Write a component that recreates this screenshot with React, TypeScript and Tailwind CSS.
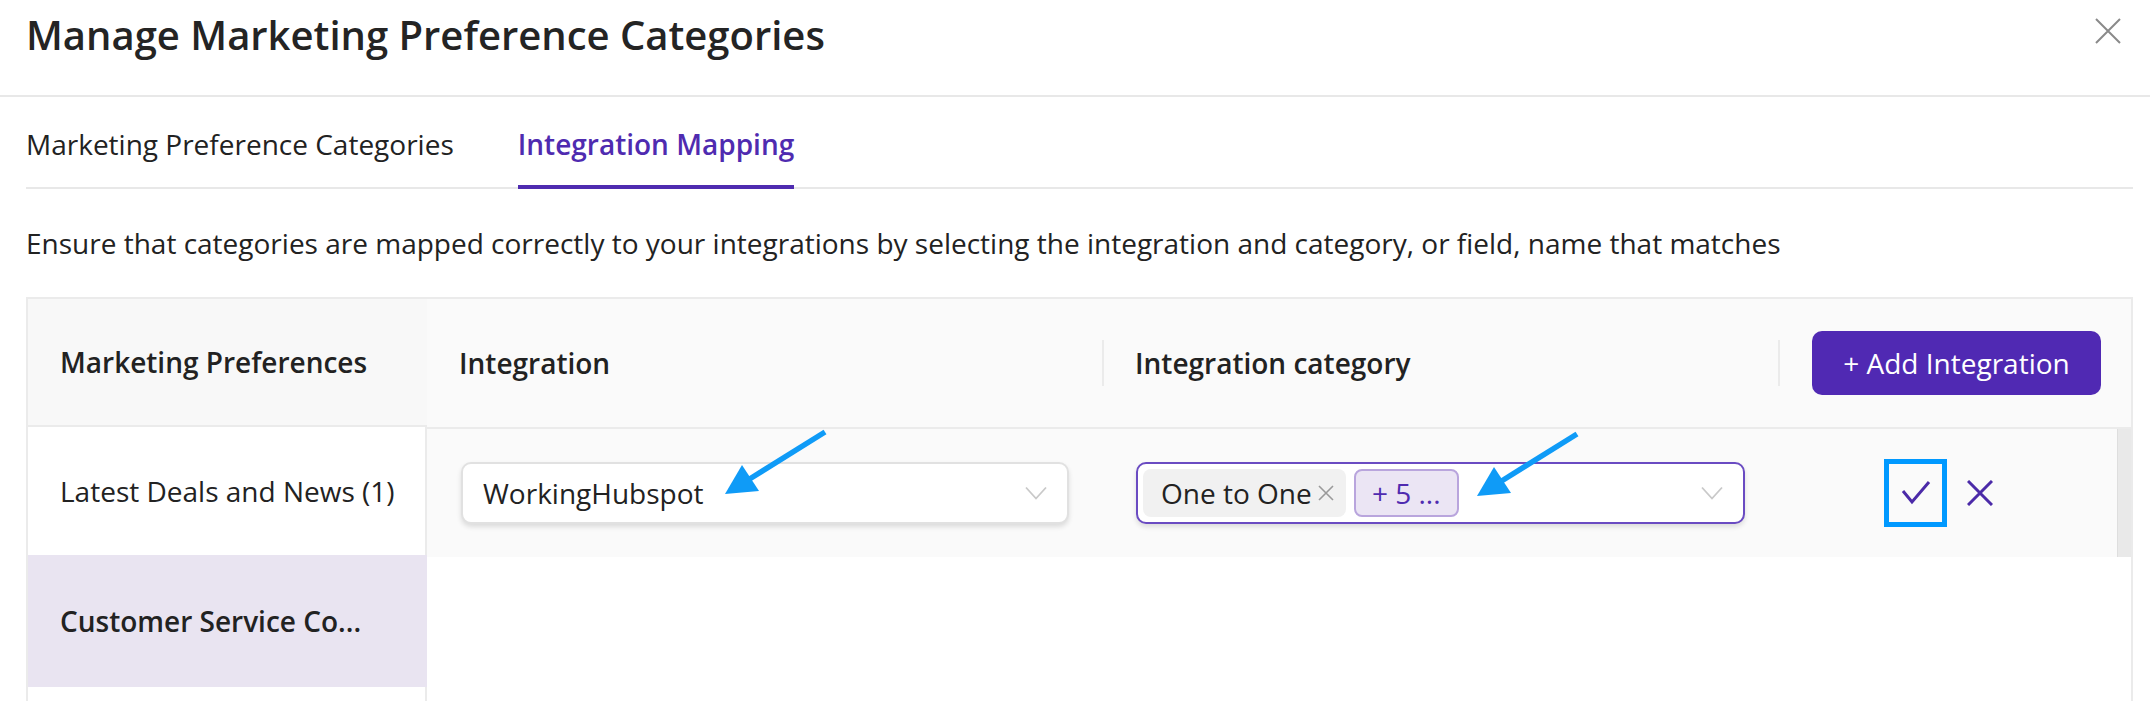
import React from "react";

function Chevron() {
  return (
    <svg width="22" height="14" viewBox="0 0 22 14" fill="none">
      <path d="M1 1.5L11 12.5L21 1.5" stroke="#c9c9c9" strokeWidth="1.8" />
    </svg>
  );
}

function Arrow({ dx, dy }: { dx: number; dy: number }) {
  return (
    <g transform={`translate(${dx} ${dy})`}>
      <line x1="825" y1="432" x2="748" y2="480" stroke="#0f9bf7" strokeWidth="5.5" strokeLinecap="butt" />
      <polygon points="725,494 742,465 759,491" fill="#0f9bf7" />
    </g>
  );
}

export default function App() {
  return (
    <div className="relative w-[2150px] h-[701px] overflow-hidden bg-white font-['Open_Sans',sans-serif] text-[#222222]">
      {/* Header */}
      <div className="h-[97px] flex items-center justify-between pl-[26px] pr-[29px] border-b-2 border-[#e8e8e8]">
        <h1 className="text-[40px] font-semibold leading-none -mt-[26px] text-[#242424]">
          Manage Marketing Preference Categories
        </h1>
        <svg width="26" height="26" viewBox="0 0 26 26" className="-mt-[34px]">
          <path d="M1 1L25 25M25 1L1 25" stroke="#8a8a8a" strokeWidth="2" />
        </svg>
      </div>

      <div className="pl-[26px] pr-[17px]">
        {/* Tabs */}
        <div className="flex gap-[64px] h-[92px] border-b-2 border-[#e8e8e8]">
          <div className="flex items-center text-[28px] text-[#222222] pt-[4px]">
            Marketing Preference Categories
          </div>
          <div className="relative flex items-center text-[28px] font-semibold text-[#4f2bb0] pt-[4px]">
            Integration Mapping
            <span className="absolute left-0 right-0 -bottom-[2px] h-[4px] bg-[#4f2bb0]" />
          </div>
        </div>

        {/* Description */}
        <div className="h-[108px] flex items-center text-[28px] text-[#222222]">
          Ensure that categories are mapped correctly to your integrations by selecting the integration and category, or field, name that matches
        </div>

        {/* Table */}
        <div className="flex h-[460px] border-2 border-[#ebebeb]">
          {/* Left column */}
          <div className="w-[399px] flex flex-col">
            <div className="h-[128px] bg-[#f8f8f8] border-b-2 border-[#ebebeb] flex items-center pl-[32px] text-[28px] font-semibold">
              Marketing Preferences
            </div>
            <div className="h-[128px] bg-white border-r-2 border-[#ebebeb] flex items-center pl-[32px] text-[28px]">
              Latest Deals and News (1)
            </div>
            <div className="h-[132px] bg-[#e9e4f1] flex items-center pl-[32px] text-[28px] font-semibold">
              Customer Service Co...
            </div>
            <div className="flex-1 bg-white border-r-2 border-[#ebebeb]" />
          </div>

          {/* Right area */}
          <div className="flex-1 flex flex-col">
            <div className="h-[130px] bg-[#fafafa] border-b-2 border-[#ebebeb] flex items-center">
              <div className="w-[675px] pl-[32px] text-[28px] font-semibold">Integration</div>
              <div className="w-[2px] h-[46px] bg-[#ebebeb]" />
              <div className="w-[674px] pl-[31px] text-[28px] font-semibold">Integration category</div>
              <div className="w-[2px] h-[46px] bg-[#ebebeb]" />
              <div className="flex-1 pl-[32px]">
                <button className="w-[289px] h-[64px] rounded-[10px] bg-[#5029b3] text-white text-[28px] flex items-center justify-center">
                  + Add Integration
                </button>
              </div>
            </div>

            <div className="h-[128px] bg-[#fafafa] flex items-stretch">
              <div className="w-[675px] pl-[34px] flex items-center">
                <div className="w-[608px] h-[62px] bg-white border-2 border-[#e1e1e1] rounded-[10px] shadow-[0_3px_5px_rgba(0,0,0,0.12)] flex items-center justify-between pl-[20px] pr-[20px]">
                  <span className="text-[28px]">WorkingHubspot</span>
                  <Chevron />
                </div>
              </div>
              <div className="w-[676px] pl-[34px] flex items-center">
                <div className="w-[609px] h-[62px] bg-white border-2 border-[#6a4bc2] rounded-[10px] shadow-[0_3px_5px_rgba(0,0,0,0.12)] flex items-center justify-between pl-[5px] pr-[20px]">
                  <div className="flex items-center gap-[8px]">
                    <div className="h-[48px] rounded-[8px] bg-[#f1f1f1] flex items-center pl-[18px] pr-[12px] gap-[6px]">
                      <span className="text-[28px] text-[#222222]">One to One</span>
                      <svg width="16" height="16" viewBox="0 0 16 16">
                        <path d="M1 1L15 15M15 1L1 15" stroke="#9a9a9a" strokeWidth="1.6" />
                      </svg>
                    </div>
                    <div className="h-[48px] w-[105px] rounded-[8px] bg-[#ebe5f4] border-2 border-[#b9a5dd] flex items-center justify-center text-[28px] text-[#4f2bb0]">
                      + 5 ...
                    </div>
                  </div>
                  <Chevron />
                </div>
              </div>
              <div className="flex-1 flex items-center pl-[106px] gap-[20px]">
                <div className="w-[63px] h-[68px] border-[5px] border-[#0099ff] flex items-center justify-center">
                  <svg width="30" height="26" viewBox="0 0 30 26" fill="none">
                    <path d="M2 11L11 22L28 2" stroke="#4b2aa8" strokeWidth="3" />
                  </svg>
                </div>
                <svg width="26" height="26" viewBox="0 0 26 26" fill="none">
                  <path d="M1 1L25 25M25 1L1 25" stroke="#4b2aa8" strokeWidth="3" />
                </svg>
              </div>
              <div className="w-[14px] bg-[#e9e9e9] border-l border-[#dedede]" />
            </div>

            <div className="flex-1 bg-white" />
          </div>
        </div>
      </div>

      {/* Annotation arrows */}
      <svg className="absolute inset-0 pointer-events-none" width="2150" height="701" viewBox="0 0 2150 701">
        <Arrow dx={0} dy={0} />
        <Arrow dx={752} dy={2} />
      </svg>
    </div>
  );
}
